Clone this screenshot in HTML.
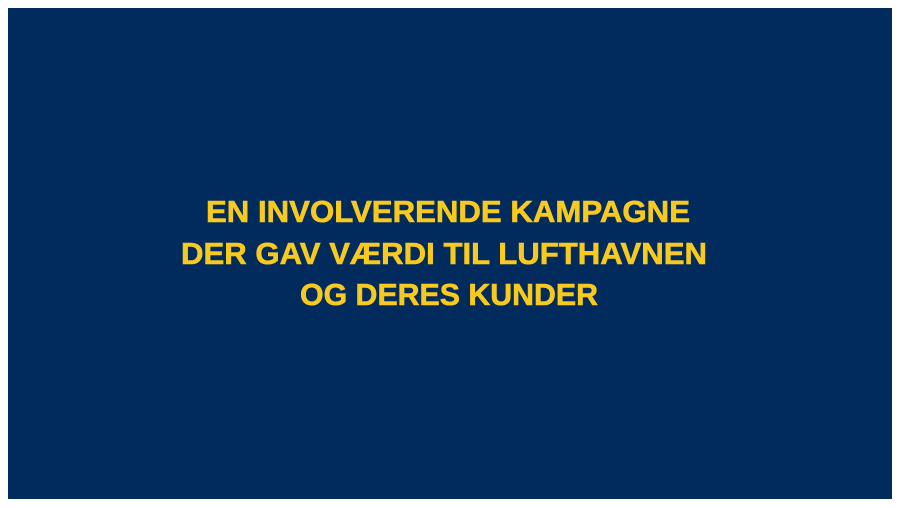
<html><head><style>
body{margin:0;width:900px;height:508px;background:#fff;overflow:hidden}
.box{position:absolute;left:8px;top:8px;width:884px;height:491px;background:#022b5d}
</style></head><body>
<div class="box"></div>
<svg width="900" height="508" style="position:absolute;left:0;top:0">
<g font-family="Liberation Sans, sans-serif" font-weight="bold" font-size="31" fill="#f8ca1f" stroke="#f8ca1f" stroke-width="0.6">
<text x="206" y="222" textLength="484" lengthAdjust="spacingAndGlyphs">EN INVOLVERENDE KAMPAGNE</text>
<text x="181" y="264" textLength="526" lengthAdjust="spacingAndGlyphs">DER GAV VÆRDI TIL LUFTHAVNEN</text>
<text x="300" y="305" textLength="298" lengthAdjust="spacingAndGlyphs">OG DERES KUNDER</text>
</g></svg>
</body></html>
